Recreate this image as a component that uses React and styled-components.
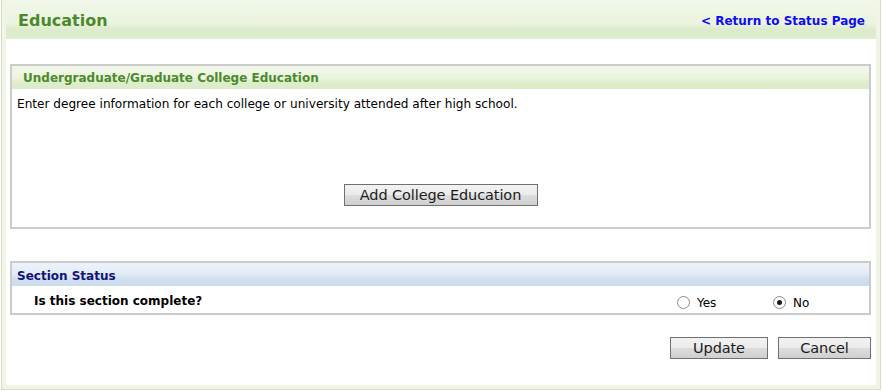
import styled, { createGlobalStyle } from 'styled-components';

const GlobalStyle = createGlobalStyle`
	html, body {
		margin: 0;
		padding: 0;
		background: #ffffff;
	}
	body {
		font-family: 'DejaVu Sans', Verdana, sans-serif;
		font-size: 12px;
		color: #000000;
	}
`;

export default function App() {
	return (
		<>
			<GlobalStyle />
			<Frame>
				<Inner>
					<PageHeader>
						<PageTitle>Education</PageTitle>
						<ReturnLink href='#'>&lt; Return to Status Page</ReturnLink>
					</PageHeader>
					<Content>
						<Section>
							<SectionHeader>
								<SectionTitle>Undergraduate/Graduate College Education</SectionTitle>
							</SectionHeader>
							<SectionBody>
								<Intro>
									Enter degree information for each college or university attended after high school.
								</Intro>
								<Centered>
									<Btn $w={194}>Add College Education</Btn>
								</Centered>
							</SectionBody>
						</Section>

						<Section $status>
							<SectionHeader $blue>
								<StatusTitle>Section Status</StatusTitle>
							</SectionHeader>
							<StatusRow>
								<Question>Is this section complete?</Question>
								<Choices>
									<Choice>
										<Radio />
										<span>Yes</span>
									</Choice>
									<Choice>
										<Radio $checked />
										<span>No</span>
									</Choice>
								</Choices>
							</StatusRow>
						</Section>

						<Actions>
							<Btn $w={98}>Update</Btn>
							<Btn $w={93}>Cancel</Btn>
						</Actions>
					</Content>
				</Inner>
			</Frame>
		</>
	);
}

const Frame = styled.div`
	margin-left: 1px;
	width: 880px;
	height: 390px;
	box-sizing: border-box;
	border: 1px solid #d5dec9;
	border-top: none;
	background: #f0f5e5;
	padding: 0 4px 4px 4px;
`;

const Inner = styled.div`
	background: #ffffff;
	height: 100%;
	display: flex;
	flex-direction: column;
`;

const PageHeader = styled.header`
	height: 39px;
	box-sizing: border-box;
	display: flex;
	align-items: center;
	justify-content: space-between;
	padding: 0 11px 0 12px;
	background: linear-gradient(to bottom, #f1f7e9 0%, #ebf4df 60%, #dcebcb 75%, #deedcd 100%);
`;

const PageTitle = styled.h1`
	margin: 0;
	font-size: 16px;
	font-weight: bold;
	color: #4a8a2c;
	padding-top: 2px;
`;

const ReturnLink = styled.a`
	font-size: 12px;
	font-weight: bold;
	color: #0d0df0;
	text-decoration: none;
	padding-top: 2px;
`;

const Content = styled.div`
	display: flex;
	flex-direction: column;
	padding: 25px 5px 0 4px;
`;

const Section = styled.section`
	border: 2px solid #cbcbcb;
	height: ${(p) => (p.$status ? '54px' : '165px')};
	box-sizing: border-box;
	margin-top: ${(p) => (p.$status ? '32px' : '0')};
	display: flex;
	flex-direction: column;
`;

const SectionHeader = styled.div`
	height: 23px;
	display: flex;
	align-items: center;
	padding: 0 5px;
	background: ${(p) =>
		p.$blue
			? 'linear-gradient(to bottom, #edf3fa 0%, #e2ebf6 45%, #cfdfef 70%, #cbdcee 100%)'
			: 'linear-gradient(to bottom, #f1f7e9 0%, #ebf4df 50%, #ddecca 75%, #dcebc9 100%)'};
`;

const SectionTitle = styled.h2`
	margin: 0 0 0 6px;
	font-size: 12px;
	font-weight: bold;
	color: #4a8a2c;
`;

const StatusTitle = styled(SectionTitle)`
	margin-left: 0;
	color: #12127a;
	padding-top: 2px;
`;

const SectionBody = styled.div`
	flex: 1;
	padding: 8px 5px 0;
	display: flex;
	flex-direction: column;
`;

const Intro = styled.p`
	margin: 0;
	font-size: 12.1px;
`;

const Centered = styled.div`
	display: flex;
	justify-content: center;
	margin-top: 73px;
`;

const Btn = styled.button`
	font-family: 'DejaVu Sans', Tahoma, sans-serif;
	font-size: 14.5px;
	color: #1c1c1c;
	height: 22px;
	width: ${(p) => p.$w}px;
	padding: 0;
	border: 1px solid #707070;
	border-radius: 0;
	background: linear-gradient(to bottom, #f2f2f2 0%, #ebebeb 50%, #dddddd 51%, #cfcfcf 100%);
	cursor: pointer;
	letter-spacing: -0.1px;
	line-height: 20px;
`;

const StatusRow = styled.div`
	flex: 1;
	display: flex;
	align-items: center;
	padding: 3px 0 0 22px;
`;

const Question = styled.span`
	font-weight: bold;
	font-size: 12px;
	flex: 1;
`;

const Choices = styled.div`
	display: flex;
	width: 192px;
	padding-top: 3px;
`;

const Choice = styled.label`
	display: flex;
	align-items: center;
	gap: 7px;
	width: 100px;
	font-size: 12px;
`;

const Radio = styled.span`
	width: 11px;
	height: 11px;
	border: 1px solid #8a8a8a;
	border-radius: 50%;
	background: #ffffff;
	display: inline-flex;
	align-items: center;
	justify-content: center;
	&::after {
		content: '';
		width: 5px;
		height: 5px;
		border-radius: 50%;
		background: ${(p) => (p.$checked ? '#1a1a1a' : 'transparent')};
	}
`;

const Actions = styled.div`
	display: flex;
	justify-content: flex-end;
	gap: 10px;
	margin-top: 22px;
`;
